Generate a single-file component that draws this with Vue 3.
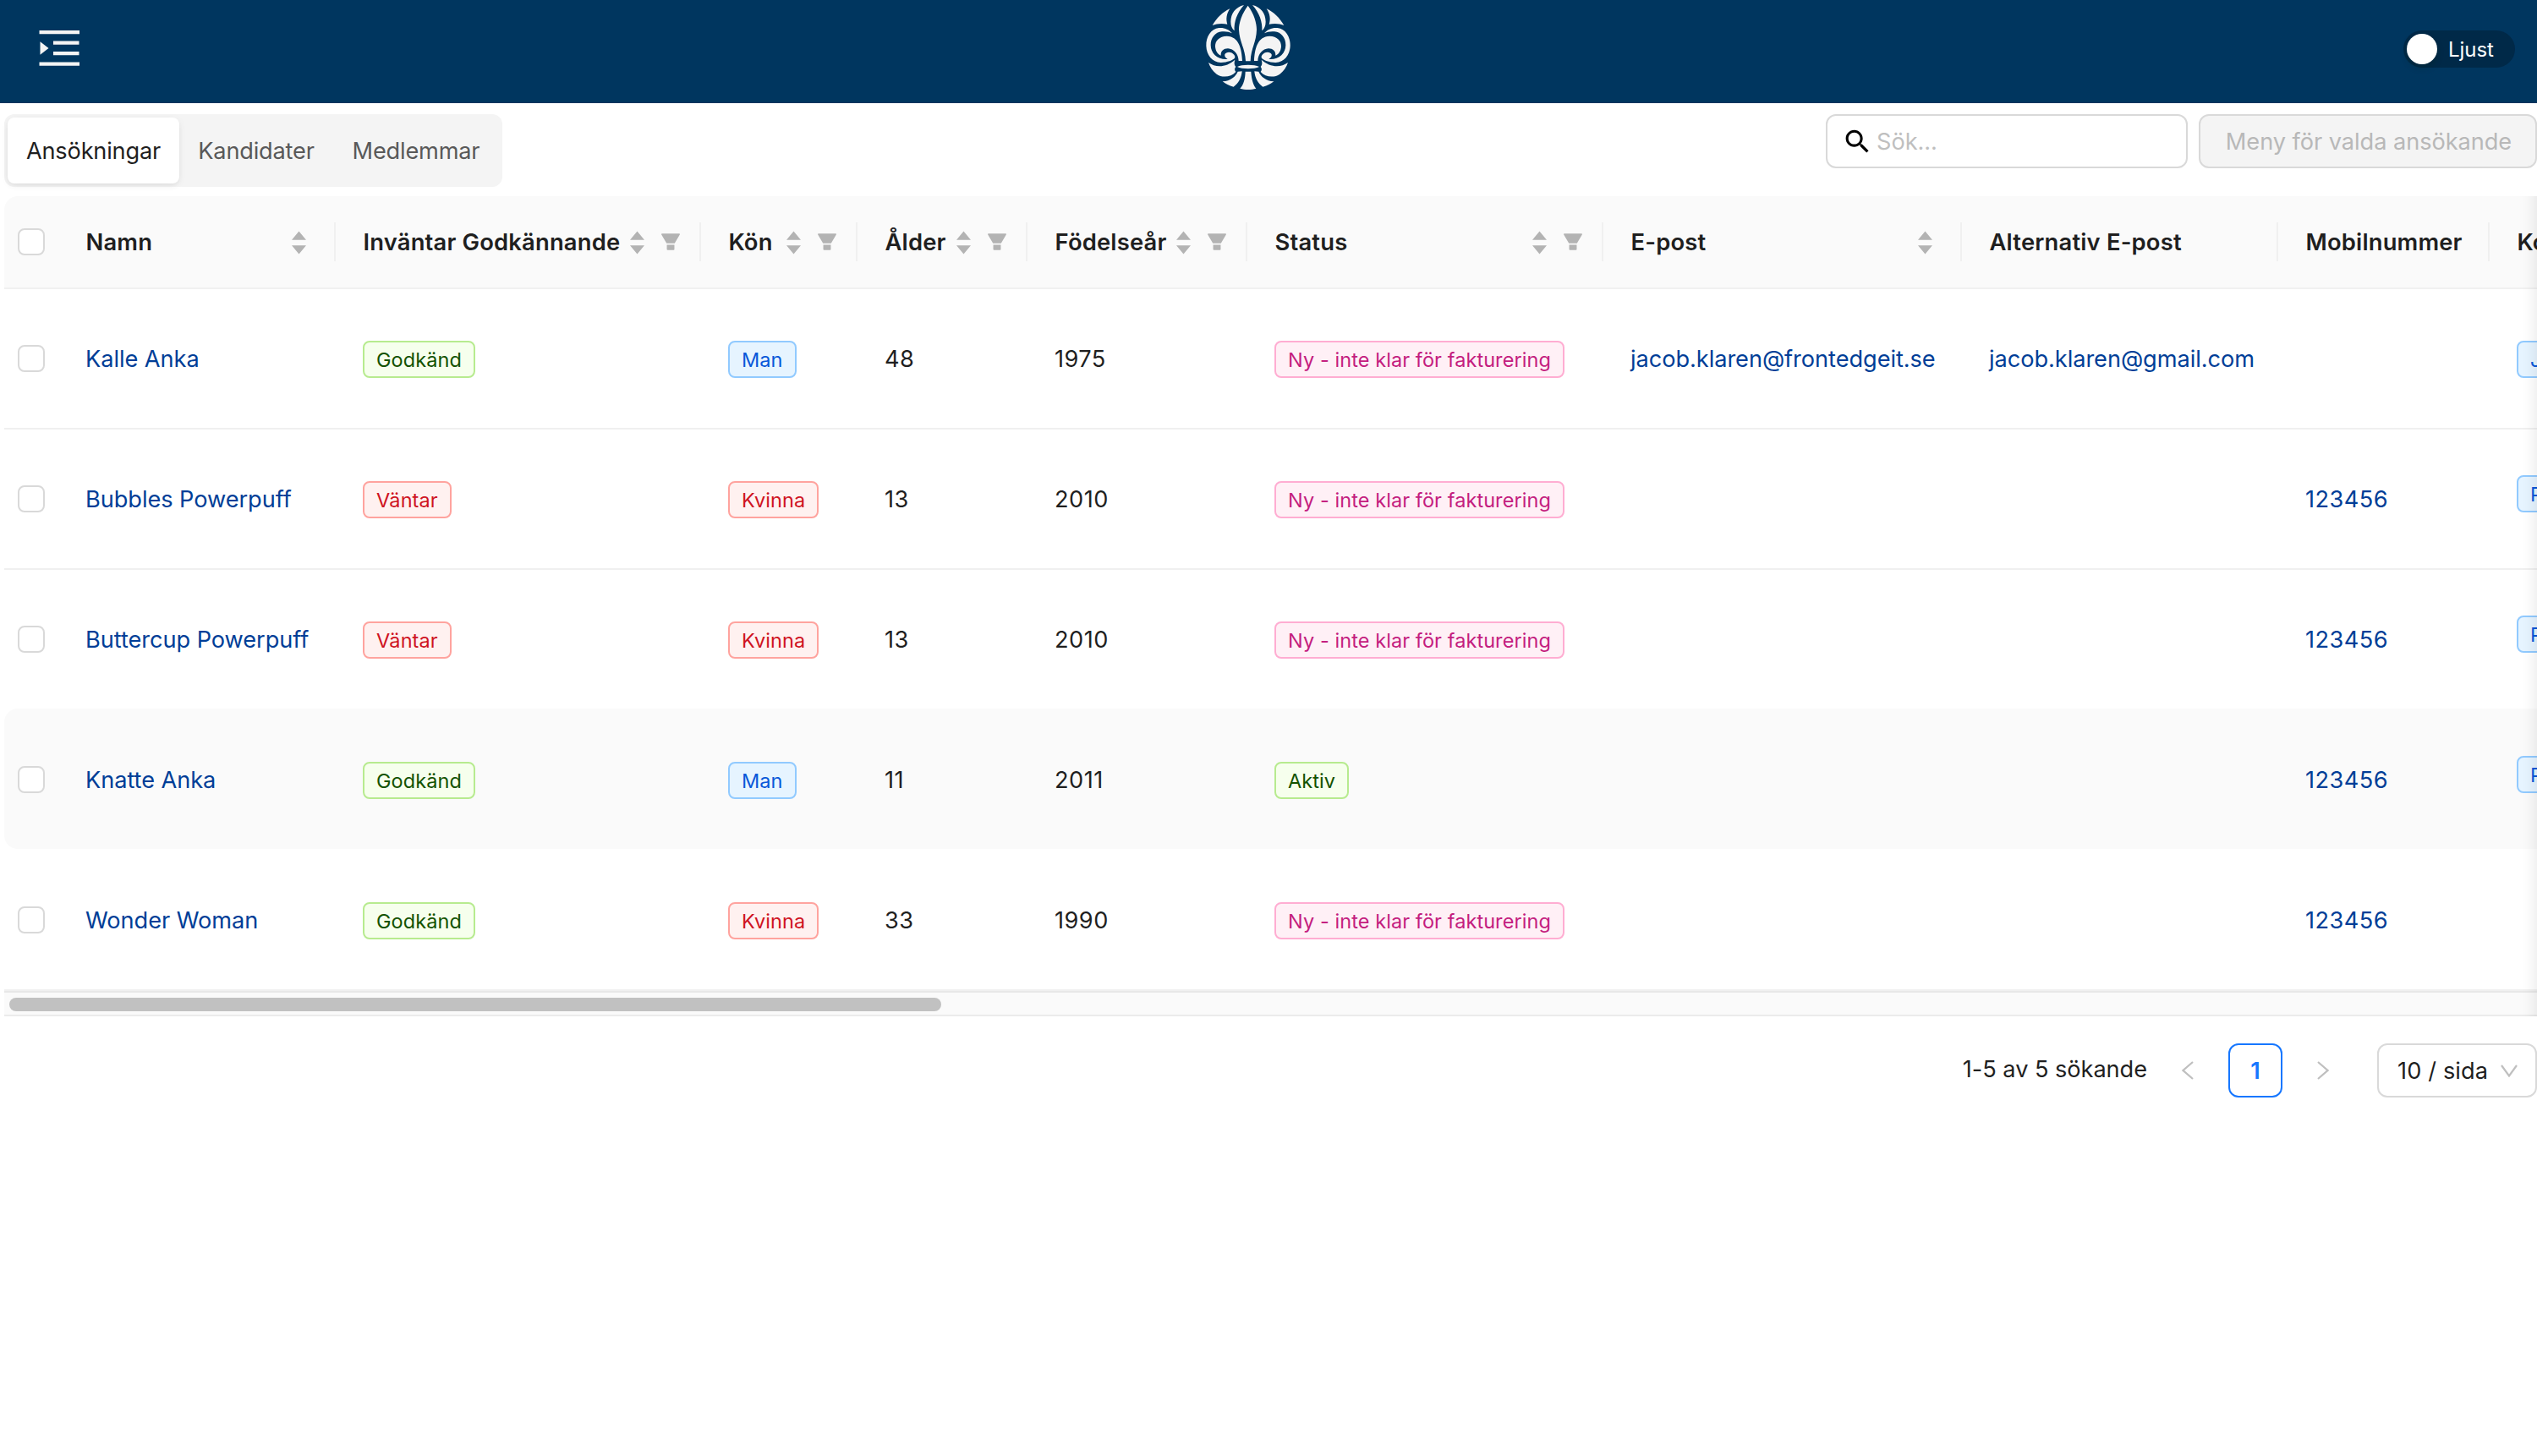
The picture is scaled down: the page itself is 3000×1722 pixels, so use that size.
<script setup>
import { ref } from 'vue'

const tabs = ['Ansökningar', 'Kandidater', 'Medlemmar']
const activeTab = ref(0)

const columns = [
  { title: 'Namn', width: 328, sort: true },
  { title: 'Inväntar Godkännande', width: 432, sort: true, filter: true },
  { title: 'Kön', width: 185, sort: true, filter: true },
  { title: 'Ålder', width: 201, sort: true, filter: true },
  { title: 'Födelseår', width: 260, sort: true, filter: true },
  { title: 'Status', width: 421, sort: true, filter: true },
  { title: 'E-post', width: 424, sort: true },
  { title: 'Alternativ E-post', width: 374 },
  { title: 'Mobilnummer', width: 250 },
  { title: 'Kontaktperson', width: 260 },
]

const ok = { tag: 'Godkänd', color: 'green' }
const waiting = { tag: 'Väntar', color: 'red' }
const man = { tag: 'Man', color: 'blue' }
const woman = { tag: 'Kvinna', color: 'red' }
const fresh = { tag: 'Ny - inte klar för fakturering', color: 'magenta' }
const active = { tag: 'Aktiv', color: 'green' }
const link = (text) => ({ link: text })
const num = (text) => ({ num: text })
const contact = (tag, raised) => ({ tag, color: 'blue', raised })

const rows = [
  [link('Kalle Anka'), ok, man, num('48'), num('1975'), fresh, link('jacob.klaren@frontedgeit.se'), link('jacob.klaren@gmail.com'), {}, contact('Jacob Klarén', false)],
  [link('Bubbles Powerpuff'), waiting, woman, num('13'), num('2010'), fresh, {}, {}, { link: '123456', digits: true }, contact('Professor', true)],
  [link('Buttercup Powerpuff'), waiting, woman, num('13'), num('2010'), fresh, {}, {}, { link: '123456', digits: true }, contact('Professor', true)],
  [link('Knatte Anka'), ok, man, num('11'), num('2011'), active, {}, {}, { link: '123456', digits: true }, contact('Pelle Anka', true)],
  [link('Wonder Woman'), ok, woman, num('33'), num('1990'), fresh, {}, {}, { link: '123456', digits: true }, {}],
]
const hovered = 3
</script>

<template>
  <div class="page">
    <header class="header">
      <svg class="menu-icon" viewBox="0 0 48 44" width="48" height="44">
        <path fill="#f4f4f4" d="M0.500 1h47.500v4.300H0.500zM17 13.500h30.500v4.300H17zM17 26h30.500v4.300H17zM0.500 38.500h47.500v4.300H0.500zM1.500 14.200v15.600L11.500 22z" />
      </svg>
      <svg class="logo" viewBox="0 0 450 366" width="150" height="122">
        <g fill="#f4f4f4">
          <path d="M227 20C206 48 195 80 195 105C197 150 217 170 219 217L236 217C238 170 257 150 258 105C258 80 248 48 227 20Z" />
          <path d="M189 237C205 228 250 228 267 237C250 246 205 246 189 237Z" />
          <path d="M218 254L238 254C240 280 245 300 256 314C240 319 215 319 199 314C212 300 217 280 218 254Z" />
          <g v-for="t in ['', 'matrix(-1 0 0 1 456 0)']" :key="t" :transform="t">
            <path d="M213 18C183 25 166 48 166 77C166 92 171 102 179 109C177 78 188 46 213 18Z" />
            <path d="M163 31C138 42 116 64 101 90C116 83 137 82 154 86C148 68 151 49 163 31Z" />
            <path d="M171 118C160 104 142 97 124 99C96 102 78 130 79 163C80 196 102 223 132 222C155 221 173 213 180 206C184 199 176 191 168 187C161 183 148 185 145 193C143 200 148 206 155 210C120 213 95 190 95 160C95 135 110 114 135 112C150 111 161 113 171 118Z" />
            <path d="M207 216C205 175 196 129 152 128C126 128 110 145 111 165C112 180 119 192 131 197C130 181 141 172 156 172C177 173 193 192 194 216Z" />
            <path d="M87 222C115 242 152 238 181 212C177 224 179 231 184 237C179 243 179 249 184 255C168 274 135 277 116 263C102 252 92 238 87 222Z" />
            <path d="M137 289C165 287 183 272 191 254L206 253C204 277 193 296 176 308C160 304 148 298 137 289Z" />
          </g>
        </g>
      </svg>
      <button class="switch"><span class="knob"></span><span class="switch-label">Ljust</span></button>
    </header>

    <div class="toolbar">
      <div class="segmented">
        <div v-for="(t, i) in tabs" :key="t" class="segment" :class="{ selected: i === activeTab }" @click="activeTab = i">{{ t }}</div>
      </div>
      <div class="actions">
        <div class="search">
          <svg viewBox="0 0 24 24" width="37" height="37"><path d="M15.500 14h-.79l-.28-.27C15.410 12.590 16 11.110 16 9.500 16 5.910 13.090 3 9.500 3S3 5.910 3 9.500 5.910 16 9.500 16c1.610 0 3.090-.59 4.230-1.570l.27.28v.79l5 4.990L20.490 19l-4.990-5zm-6 0C7.010 14 5 11.990 5 9.500S7.010 5 9.500 5 14 7.010 14 9.500 11.990 14 9.500 14z" /></svg>
          <span>Sök...</span>
        </div>
        <button class="bulk" disabled>Meny för valda ansökande</button>
      </div>
    </div>

    <div class="table-wrap">
      <div class="table">
        <div class="thead">
          <div class="cell check"><span class="checkbox"></span></div>
          <div v-for="c in columns" :key="c.title" class="cell head" :style="{ width: c.width + 'px' }">
            <span class="title">{{ c.title }}</span>
            <svg v-if="c.sort" class="sorter" :class="{ alone: !c.filter }" viewBox="0 0 17 28" width="17" height="28"><path d="M8.500 0.500L17 10.700H0zM8.500 27.500L17 17.300H0z" /></svg>
            <svg v-if="c.filter" class="filter" viewBox="0 0 1024 1024" width="28" height="28"><path d="M349 838c0 17.700 14.200 32 31.800 32h262.400c17.600 0 31.800-14.300 31.800-32V642H349v196zm531.100-684H143.900c-24.500 0-39.800 26.700-27.500 48l221.300 376h348.800l221.300-376c12.100-21.300-3.200-48-27.700-48z" /></svg>
          </div>
        </div>
        <div v-for="(r, i) in rows" :key="i" class="row" :class="{ hover: i === hovered, before: i === hovered - 1 }">
          <div class="cell check"><span class="checkbox"></span></div>
          <div v-for="(c, j) in r" :key="j" class="cell" :style="{ width: columns[j].width + 'px' }">
            <a v-if="c.link" :class="{ digits: c.digits }">{{ c.link }}</a>
            <span v-else-if="c.num" class="digits">{{ c.num }}</span>
            <span v-else-if="c.tag" class="tag" :class="[c.color, { raised: c.raised }]">{{ c.tag }}</span>
          </div>
        </div>
      </div>
      <div class="scrollbar"><div class="thumb"></div></div>
      <div class="edge"></div>
    </div>

    <div class="pagination">
      <span class="total">1-5 av 5 sökande</span>
      <svg class="arrow prev" viewBox="0 0 14 22" width="14" height="22"><path d="M13 1L1.500 11L13 21" /></svg>
      <span class="current">1</span>
      <svg class="arrow next" viewBox="0 0 14 22" width="14" height="22"><path d="M1 1L12.500 11L1 21" /></svg>
      <div class="size">
        <span>10 / sida</span>
        <svg class="arrow" viewBox="0 0 20 15" width="20" height="15"><path d="M1 1L10 13.500L19 1" /></svg>
      </div>
    </div>
  </div>
</template>

<style>
body { background: #fff; }
</style>

<style scoped>
.page {
  width: 3000px;
  height: 1722px;
  overflow: hidden;
  background: #fff;
  color: #1f1f1f;
  font-family: Inter, "Liberation Sans", sans-serif;
  font-size: 27.200px;
  font-weight: 370;
  letter-spacing: -0.060px;
  line-height: 44px;
}
.page *, .page { box-sizing: border-box; }
svg { display: block; flex: none; }
button { font: inherit; letter-spacing: inherit; margin: 0; border: 0; padding: 0; }

.header {
  height: 122px;
  background: #00365f;
  display: grid;
  grid-template-columns: 1400px 150px 1fr;
  align-items: start;
}
.menu-icon { margin: 34.500px 0 0 46px; }
.switch {
  justify-self: end;
  margin: 36px 26px 0 0;
  width: 132px;
  height: 44px;
  border-radius: 22px;
  background: #002948;
  color: #fff;
  display: flex;
  align-items: center;
  gap: 13px;
  padding-left: 4px;
  font-size: 24px;
  font-weight: 420;
}
.switch-label { padding-top: 1px; }
.knob {
  width: 36px;
  height: 36px;
  border-radius: 50%;
  background: #fff;
  box-shadow: 0 4px 8px rgba(0, 35, 11, 0.200);
}

.toolbar {
  height: 110px;
  padding: 13px 0 0 5px;
  display: flex;
  justify-content: space-between;
  align-items: flex-start;
}
.segmented {
  height: 86px;
  width: 589px;
  padding: 4px;
  border-radius: 12px;
  background: #f4f4f4;
  display: flex;
}
.segment {
  height: 78px;
  line-height: 80px;
  color: #595959;
  letter-spacing: -0.200px;
  flex: 182px 0 0;
  text-align: center;
  white-space: nowrap;
}
.segment.selected {
  flex-basis: 203px;
  background: #fff;
  color: #1f1f1f;
  border-radius: 8px;
  box-shadow: 0 2px 4px rgba(0, 0, 0, 0.030), 0 2px 12px -2px rgba(0, 0, 0, 0.080), 0 4px 8px rgba(0, 0, 0, 0.020);
}
.segment:last-child { flex-basis: 196px; }
.actions { display: flex; gap: 13px; }
.search {
  width: 428px;
  height: 64px;
  border: 2px solid #d9d9d9;
  border-radius: 12px;
  display: flex;
  align-items: center;
  padding-left: 17px;
  color: #bfbfbf;
}
.search svg { margin-top: 1px; }
.search span { margin-left: 4px; padding-top: 1px; }
.bulk {
  width: 400px;
  height: 64px;
  line-height: 44px;
  padding: 1px 0 0 2px;
  border: 2px solid #d9d9d9;
  border-radius: 12px;
  background: #f4f4f4;
  color: #b8b8b8;
  text-align: center;
  white-space: nowrap;
}

.table-wrap {
  position: relative;
  margin-left: 5px;
  overflow: hidden;
  border-radius: 16px 0 0 0;
}
.table { width: 3199px; }
.thead {
  display: flex;
  height: 110px;
  background: #fafafa;
  border-bottom: 2px solid #f0f0f0;
  font-weight: 600;
  font-size: 27.400px;
  letter-spacing: 0.170px;
}
.row {
  display: flex;
  height: 166px;
  border-bottom: 2px solid #f0f0f0;
}
.row.before { border-bottom-color: #fff; }
.row.hover {
  position: relative;
  margin: -2px 0 2px;
  padding-top: 2px;
  border: 0;
  background: #fafafa;
  border-radius: 16px;
}
.cell {
  flex: none;
  display: flex;
  align-items: center;
  padding-left: 32px;
  white-space: nowrap;
}
.cell.check { width: 64px; padding-left: 16px; }
.checkbox {
  width: 32px;
  height: 32px;
  border: 2px solid #d9d9d9;
  border-radius: 8px;
  background: #fff;
}
.head {
  background: linear-gradient(#f0f0f0, #f0f0f0) right 31px / 2px 46px no-repeat;
}
.title { flex: 1; padding-left: 0.500px; }
.sorter { fill: #b3b3b3; margin-top: 1px; }
.sorter.alone { margin-right: 35.500px; }
.filter { fill: #b3b3b3; margin: 0 22px 0 17.500px; }

a { color: #003e97; }
a, .digits { padding-top: 1.500px; }
.digits { letter-spacing: 0.450px; }
.tag {
  height: 44px;
  line-height: 41.500px;
  padding: 0 14px;
  margin-top: 2px;
  border: 2px solid;
  border-radius: 8px;
  font-size: 23.500px;
  letter-spacing: 0.080px;
}
.tag.raised { margin: 0 0 12px; }
.green { color: #135200; background: #f6ffed; border-color: #b7eb8f; }
.red { color: #cf1322; background: #fff1f0; border-color: #ffa39e; }
.blue { color: #0958d9; background: #e6f4ff; border-color: #91caff; }
.magenta { color: #c41d7f; background: #fff0f6; border-color: #ffadd2; }

.scrollbar {
  height: 30px;
  border-top: 2px solid #e8e8e8;
  border-bottom: 2px solid #ebebeb;
  background: #fafafa;
  padding: 6px 0 0 6px;
}
.thumb { width: 1102px; height: 16px; border-radius: 8px; background: #c1c1c1; }
.edge {
  position: absolute;
  top: 0;
  right: 0;
  bottom: 0;
  width: 60px;
  box-shadow: inset -20px 0 16px -16px rgba(5, 5, 5, 0.080);
  pointer-events: none;
}

.pagination {
  margin-top: 32px;
  height: 64px;
  display: flex;
  justify-content: flex-end;
  align-items: center;
}
.total { margin: -3px 41px 0 0; }
.arrow { fill: none; stroke: #bfbfbf; stroke-width: 2.200; }
.current {
  width: 64px;
  height: 64px;
  line-height: 61px;
  margin: 0 41px;
  border: 2px solid #1677ff;
  border-radius: 12px;
  color: #1677ff;
  font-weight: 600;
  text-align: center;
}
.size {
  width: 189px;
  height: 64px;
  margin-left: 57px;
  border: 2px solid #d9d9d9;
  border-radius: 12px;
  display: flex;
  align-items: center;
  justify-content: space-between;
  padding: 1px 21px 0 22px;
  font-weight: 400;
  letter-spacing: 0.120px;
}
</style>
